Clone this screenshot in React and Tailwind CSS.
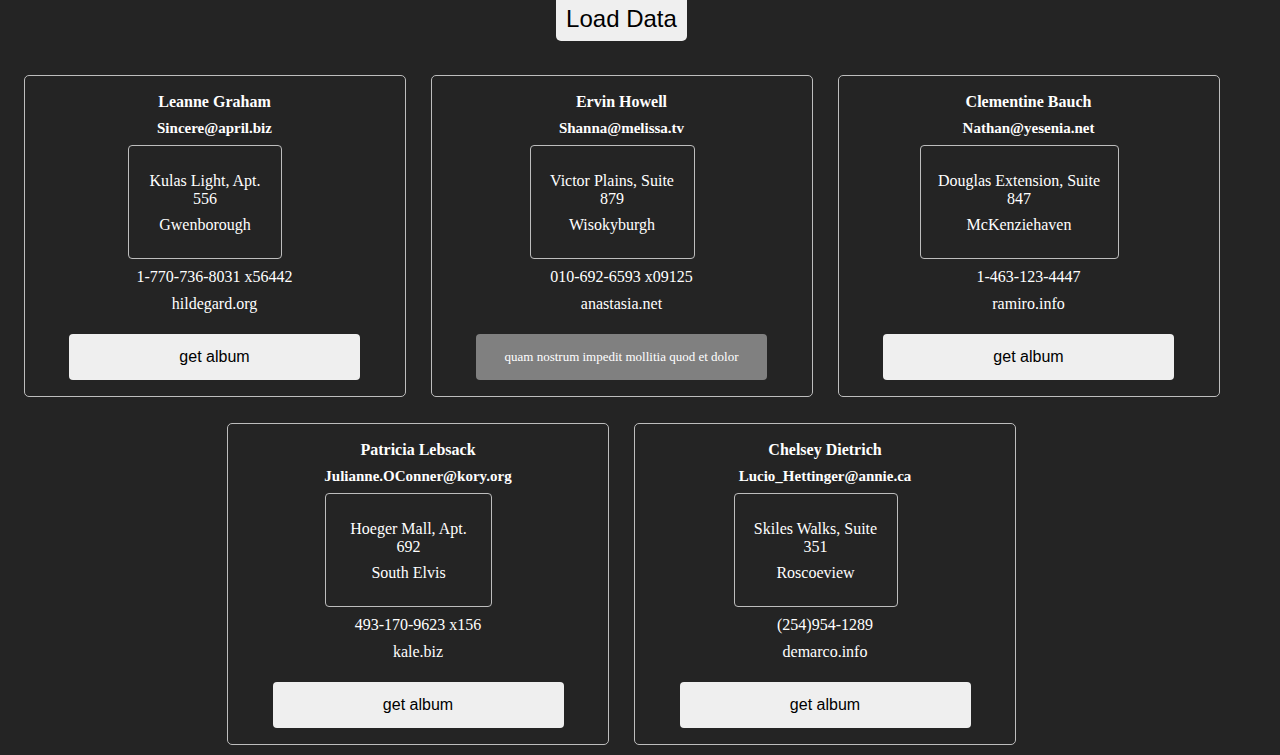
import React from "react";

const users = [
  { name: "Leanne Graham", email: "Sincere@april.biz", l1: "Kulas Light, Apt.", l2: "556", city: "Gwenborough", phone: "1-770-736-8031 x56442", web: "hildegard.org", w: "w-[154px]" },
  { name: "Ervin Howell", email: "Shanna@melissa.tv", l1: "Victor Plains, Suite", l2: "879", city: "Wisokyburgh", phone: "010-692-6593 x09125", web: "anastasia.net", w: "w-[165px]", album: "quam nostrum impedit mollitia quod et dolor" },
  { name: "Clementine Bauch", email: "Nathan@yesenia.net", l1: "Douglas Extension, Suite", l2: "847", city: "McKenziehaven", phone: "1-463-123-4447", web: "ramiro.info", w: "w-[199px]" },
  { name: "Patricia Lebsack", email: "Julianne.OConner@kory.org", l1: "Hoeger Mall, Apt.", l2: "692", city: "South Elvis", phone: "493-170-9623 x156", web: "kale.biz", w: "w-[167px]" },
  { name: "Chelsey Dietrich", email: "Lucio_Hettinger@annie.ca", l1: "Skiles Walks, Suite", l2: "351", city: "Roscoeview", phone: "(254)954-1289", web: "demarco.info", w: "w-[164px]" },
];

function Card({ u }) {
  return (
    <div className="w-[382px] h-[322px] border border-[#bdbdbd] rounded-[5px] pt-[15px] flex flex-col items-center text-white font-['Liberation_Serif',serif]">
      <div className="h-[20px] leading-[22px] text-[16px] font-bold">{u.name}</div>
      <div className="mt-[6px] h-[20px] leading-[22px] text-[15px] font-bold">{u.email}</div>
      <div className={`${u.w} mt-[8px] mr-[19px] h-[114px] border border-[#bdbdbd] rounded-[4px] pt-[26px] flex flex-col items-center text-[16px] text-center`}>
        <div className="leading-[18px]">{u.l1}</div>
        <div className="leading-[18px]">{u.l2}</div>
        <div className="mt-[8px] leading-[18px]">{u.city}</div>
      </div>
      <div className="mt-[8px] h-[18px] leading-[20px] text-[16px]">{u.phone}</div>
      <div className="mt-[9px] h-[18px] leading-[20px] text-[16px]">{u.web}</div>
      {u.album ? (
        <button className="mt-[22px] w-[291px] h-[46px] rounded-[4px] bg-[#808080] text-white text-[13px] font-['Liberation_Serif',serif]">
          {u.album}
        </button>
      ) : (
        <button className="mt-[22px] w-[291px] h-[46px] rounded-[4px] bg-[#efefef] text-black text-[16px] font-['Liberation_Sans',Arial,sans-serif]">
          get album
        </button>
      )}
    </div>
  );
}

export default function App() {
  return (
    <div className="min-h-[755px] w-full bg-[#242424] overflow-hidden">
      <div className="w-[1243px] flex flex-col items-center">
        <button className="w-[131px] h-[41px] pb-[3px] bg-[#efefef] rounded-b-[5px] text-[24px] text-black font-['Liberation_Sans',Arial,sans-serif] leading-none">
          Load Data
        </button>
        <div className="mt-[34px] w-full flex flex-wrap justify-center gap-x-[25px] gap-y-[26px]">
          {users.map((u) => (
            <Card key={u.name} u={u} />
          ))}
        </div>
      </div>
    </div>
  );
}
